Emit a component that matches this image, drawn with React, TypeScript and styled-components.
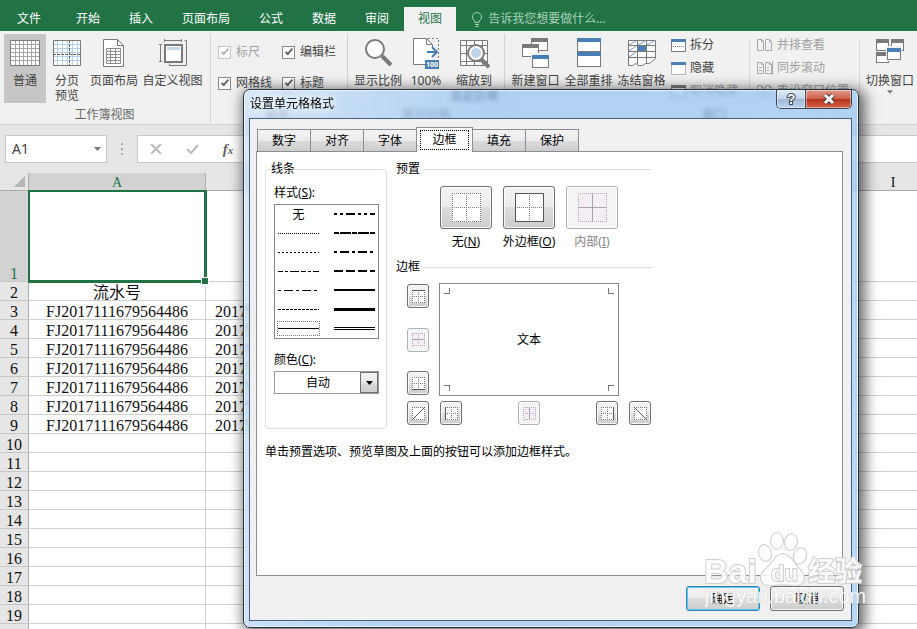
import React from 'react';
import styled, { createGlobalStyle, css } from 'styled-components';

const UI = '"Noto Sans", "Noto Sans CJK SC", sans-serif';
const SHEET = '"Liberation Serif", "Noto Sans CJK SC", serif';

const GlobalStyle = createGlobalStyle`
  *, *::before, *::after { box-sizing: border-box; }
  body { margin: 0; font: 12px/16px ${UI}; color: #444; background: #fff; }
  button, input, select { font: inherit; color: inherit; margin: 0; padding: 0; border: 0; background: none; }
  svg { display: block; flex: none; }
`;

const Window = styled.div`
  position: relative;
  display: flex;
  flex-direction: column;
  height: 100vh;
  overflow: hidden;
`;

/* ---------- ribbon tabs ---------- */

const TabBar = styled.nav`
  display: flex;
  align-items: flex-end;
  flex: none;
  height: 31px;
  padding-left: 2px;
  background: #217346;
  white-space: nowrap;
`;

const RibbonTab = styled.button<{ $active?: boolean; $file?: boolean }>`
  height: 24px;
  padding: ${p => (p.$file ? '0 20px 0 15px' : '0 14px')};
  margin-right: 1px;
  color: ${p => (p.$active ? '#217346' : '#fff')};
  background: ${p => (p.$active ? '#f1f1f1' : 'transparent')};
`;

const TellMe = styled.button`
  display: flex;
  align-items: center;
  gap: 5px;
  height: 24px;
  margin-left: 14px;
  color: #a9d0b9;
`;

/* ---------- ribbon ---------- */

const Ribbon = styled.div`
  display: flex;
  flex: none;
  height: 94px;
  padding: 3px 0 1px 4px;
  background: #f1f1f1;
  border-bottom: 1px solid #d2d2d2;
  white-space: nowrap;
  overflow: hidden;
`;

const Group = styled.section<{ $pad: string }>`
  display: flex;
  flex: none;
  flex-direction: column;
  justify-content: space-between;
  padding: ${p => p.$pad};
  border-right: 1px solid #d4d4d4;
`;

const GroupBody = styled.div`
  display: flex;
  align-items: flex-start;
`;

const GroupLabel = styled.div`
  text-align: center;
  color: #666;
`;

const BigButton = styled.button<{ $w: number; $active?: boolean }>`
  display: flex;
  flex-direction: column;
  align-items: center;
  width: ${p => p.$w}px;
  height: 69px;
  padding-top: 2px;
  line-height: 15px;
  background: ${p => (p.$active ? '#c6c6c6' : 'transparent')};
`;

const BigLabel = styled.span`
  margin-top: 2px;
  white-space: pre;
`;

const CheckGrid = styled.div`
  display: grid;
  grid-template-columns: 64px auto;
  grid-auto-rows: 16px;
  row-gap: 15px;
  padding-top: 10px;
`;

const CheckLabel = styled.label<{ $dim?: boolean }>`
  display: flex;
  align-items: center;
  gap: 5px;
  color: ${p => (p.$dim ? '#a0a0a0' : '#444')};
`;

const CheckBox = styled.input`
  appearance: none;
  display: grid;
  place-items: center;
  width: 13px;
  height: 13px;
  border: 1px solid #8a8a8a;
  background: #fff;
  &::after {
    content: '';
    width: 8px;
    height: 4px;
    margin-bottom: 3px;
    border: solid #666;
    border-width: 0 0 2px 2px;
    transform: rotate(-48deg);
  }
  &:disabled { border-color: #c6c6c6; }
  &:disabled::after { border-color: #b5b5b5; }
`;

const SmallColumn = styled.div<{ $ml: number; $w: number }>`
  display: flex;
  flex-direction: column;
  align-items: flex-start;
  gap: 7px;
  width: ${p => p.$w}px;
  margin-left: ${p => p.$ml}px;
  padding-top: 3px;
`;

const SmallButton = styled.button<{ $dim?: boolean }>`
  display: flex;
  align-items: center;
  gap: 4px;
  height: 16px;
  color: ${p => (p.$dim ? '#a0a0a0' : '#444')};
`;

const InnerRule = styled.div`
  width: 1px;
  height: 64px;
  margin-top: 6px;
  background: #dadada;
`;

/* ---------- formula bar ---------- */

const FormulaBar = styled.div`
  display: flex;
  align-items: center;
  flex: none;
  height: 48px;
  padding-left: 5px;
  background: #e6e6e6;
`;

const NameBox = styled.div`
  display: flex;
  width: 102px;
  height: 28px;
  padding: 0 5px 0 6px;
  background: #fff;
  border: 1px solid #c6c6c6;
`;

const NameInput = styled.input`
  flex: 1;
  min-width: 0;
  font-size: 14px;
`;

const Dots = styled.div`
  display: grid;
  place-items: center;
  width: 30px;
`;

const FormulaBox = styled.div`
  display: flex;
  align-items: center;
  flex: 1;
  height: 28px;
  padding-left: 9px;
  background: #fff;
  border: 1px solid #c6c6c6;
  border-right: 0;
`;

const FormulaButton = styled.button`
  display: grid;
  place-items: center;
  width: 18px;
  height: 26px;
  margin-right: 18px;
  color: #666;
  font: italic bold 15px/20px "Liberation Serif", serif;
`;

const Sub = styled.small`
  font-size: 11px;
`;

const FormulaInput = styled.input`
  flex: 1;
  min-width: 0;
`;

/* ---------- sheet ---------- */

const SheetArea = styled.main`
  flex: 1;
  min-height: 0;
  overflow: hidden;
`;

const Sheet = styled.table`
  width: 934px;
  table-layout: fixed;
  border-collapse: separate;
  border-spacing: 0;
  font: 16px/15px ${SHEET};
  color: #111;
`;

const head = css`
  font-weight: 400;
  background: #e6e6e6;
`;

const ColHead = styled.th<{ $on?: boolean }>`
  ${head}
  height: 18px;
  padding: 3px 0 0;
  font-size: 14px;
  line-height: 14px;
  border-bottom: 1px solid #ababab;
  border-right: ${p => (p.$on ? '1px solid #ababab' : '0')};
  ${p => p.$on && 'background: #d2d2d2; color: #217346;'}
`;

const Corner = styled.th`
  ${head}
  padding: 0;
  border-right: 1px solid #ababab;
  border-bottom: 1px solid #ababab;
`;

const CornerMark = styled.svg`
  margin-left: auto;
  margin-right: 3px;
`;

const RowHead = styled.th<{ $on?: boolean }>`
  ${head}
  height: ${p => (p.$on ? 91 : 19)}px;
  padding: 3px 0 0;
  vertical-align: bottom;
  border-right: 1px solid #ababab;
  border-bottom: 1px solid #c6c6c6;
  ${p => p.$on && 'background: #d2d2d2; color: #217346;'}
`;

const Cell = styled.td<{ $center?: boolean; $rule?: boolean; $on?: boolean }>`
  position: relative;
  padding: 3px ${p => (p.$center ? 0 : 9)}px 0;
  text-align: ${p => (p.$center ? 'center' : 'left')};
  border-bottom: 1px solid #d0d0d0;
  border-right: ${p => (p.$rule ? '1px solid #d0d0d0' : '0')};
  background: #fff;
  ${p => p.$on && 'box-shadow: 0 0 0 1px #217346, inset 0 0 0 1px #217346; z-index: 1; border-color: #217346;'}
`;

const FillHandle = styled.span`
  position: absolute;
  right: -3px;
  bottom: -3px;
  width: 6px;
  height: 6px;
  background: #217346;
  outline: 1px solid #fff;
`;

/* ---------- dialog ---------- */

const Dialog = styled.section`
  position: absolute;
  left: 243px;
  top: 89px;
  display: flex;
  flex-direction: column;
  width: 616px;
  height: 539px;
  padding: 0 6px 6px 5px;
  color: #000;
  border: 1px solid #26323f;
  border-radius: 7px;
  background: linear-gradient(100deg, rgba(196, 222, 248, .65), rgba(136, 189, 243, .62) 35%, rgba(140, 192, 245, .62));
  backdrop-filter: blur(2px);
  box-shadow: inset 0 0 0 1px rgba(255, 255, 255, .65), 3px 3px 14px 3px rgba(0, 0, 0, .6);
`;

const TitleBar = styled.header`
  display: flex;
  justify-content: space-between;
  align-items: flex-start;
  height: 28px;
  padding-left: 1px;
`;

const Title = styled.h1`
  margin: 0;
  padding-top: 6px;
  font: 12px/16px ${UI};
  text-shadow: 0 0 8px #fff, 0 0 8px #fff;
`;

const Caption = styled.div`
  display: flex;
  height: 19px;
  border: 1px solid #3b4755;
  border-top: 0;
  border-radius: 0 0 5px 5px;
  overflow: hidden;
`;

const CaptionButton = styled.button<{ $close?: boolean }>`
  display: grid;
  place-items: center;
  width: ${p => (p.$close ? 46 : 28)}px;
  box-shadow: inset 0 0 0 1px rgba(255, 255, 255, .45);
  background: ${p =>
    p.$close
      ? 'linear-gradient(#e39a8c 0, #d0604c 48%, #b5301a 50%, #d5644a)'
      : 'linear-gradient(#dbe8f5 0, #c3d6ea 48%, #9fb8d2 50%, #bcd3ec)'};
  border-left: ${p => (p.$close ? '1px solid #3b4755' : '0')};
`;

const Body = styled.div`
  display: flex;
  flex-direction: column;
  flex: 1;
  padding: 8px 8px 9px 6px;
  background: #f0f0f0;
  border: 1px solid #4c6078;
`;

const Tabs = styled.div`
  display: flex;
  align-items: flex-end;
  height: 24px;
  padding-left: 1px;
`;

const Tab = styled.button<{ $active?: boolean }>`
  display: grid;
  place-items: center;
  width: ${p => (p.$active ? 57 : 54)}px;
  height: ${p => (p.$active ? 25 : 22)}px;
  margin: 0 -1px ${p => (p.$active ? '-1px' : '0')} 0;
  border: 1px solid #8c8e94;
  border-bottom: 0;
  z-index: ${p => (p.$active ? 1 : 0)};
  background: ${p => (p.$active ? '#fff' : 'linear-gradient(#f3f3f3 0, #ebebeb 50%, #dcdcdc 51%, #cdcdcd)')};
`;

const Focus = styled.span`
  padding: 1px 11px;
  border: 1px dotted #000;
`;

const Panel = styled.div`
  display: flex;
  flex-direction: column;
  flex: 1;
  padding: 9px 8px;
  background: #fff;
  border: 1px solid #8c8e94;
`;

const PanelColumns = styled.div`
  display: flex;
  align-items: flex-start;
  gap: 9px;
`;

const LineGroup = styled.fieldset`
  display: flex;
  flex-direction: column;
  width: 122px;
  height: 268px;
  min-width: 0;
  margin: 0;
  padding: 0 7px 0 8px;
  border: 1px solid #d5dfe5;
  border-radius: 4px;
`;

const Legend = styled.legend`
  margin-left: -3px;
  padding: 0;
  line-height: 16px;
`;

const FieldLabel = styled.label<{ $gap: number }>`
  display: block;
  line-height: 16px;
  margin: ${p => p.$gap}px 0 3px;
`;

const StyleList = styled.div`
  display: grid;
  grid-auto-flow: column;
  grid-template-rows: repeat(7, 19px);
  grid-template-columns: 43px 43px;
  justify-content: space-between;
  width: 105px;
  height: 135px;
  padding: 0 2px;
  border: 1px solid #828790;
`;

const StyleItem = styled.button<{ $focus?: boolean }>`
  display: grid;
  place-items: center;
  width: 43px;
  height: ${p => (p.$focus ? 15 : 19)}px;
  align-self: center;
  border: ${p => (p.$focus ? '1px dotted #777' : '0')};
`;

const ColorBox = styled.div`
  display: grid;
  grid-template-columns: 1fr 18px;
  width: 105px;
  height: 23px;
  border: 1px solid #9a9a9a;
`;

const ColorSelect = styled.select`
  grid-area: 1 / 1 / 2 / 3;
  appearance: none;
  width: 100%;
  padding-left: 31px;
`;

const ColorArrow = styled.span`
  grid-area: 1 / 2;
  display: grid;
  place-items: center;
  border: 1px solid #707070;
  background: linear-gradient(#f3f3f3 0, #ebebeb 50%, #dcdcdc 51%, #cdcdcd);
  pointer-events: none;
`;

const RightSide = styled.div`
  flex: none;
  width: 256px;
`;

const Section = styled.h2`
  display: flex;
  align-items: center;
  gap: 5px;
  margin: 0;
  font: 12px/16px ${UI};
  &::after {
    content: '';
    flex: 1;
    height: 1px;
    background: #d5dfe5;
  }
`;

const Presets = styled.div`
  display: flex;
  gap: 11px;
  padding: 9px 0 9px 44px;
`;

const PresetLabel = styled.label<{ $dim?: boolean }>`
  display: flex;
  flex-direction: column;
  align-items: center;
  gap: 5px;
  width: 52px;
  white-space: nowrap;
  color: ${p => (p.$dim ? '#838383' : '#000')};
`;

const face = css`
  display: grid;
  place-items: center;
  border: 1px solid #707070;
  border-radius: 3px;
  box-shadow: inset 0 0 0 1px rgba(255, 255, 255, .8);
  background: linear-gradient(#f3f3f3 0, #ebebeb 48%, #dddddd 50%, #cdcdcd);
  &:disabled {
    border-color: #adb2b5;
    background: #f4f4f4;
  }
`;

const PresetButton = styled.button`
  ${face}
  width: 52px;
  height: 43px;
`;

const EdgeButton = styled.button`
  ${face}
  width: 22px;
  height: 24px;
`;

const BorderGrid = styled.div`
  display: grid;
  grid-template-columns: 22px 180px 22px;
  grid-template-rows: 113px 24px;
  gap: 5px 10px;
  padding: 8px 0 0 11px;
`;

const Stack = styled.div`
  display: flex;
  flex-direction: column;
  justify-content: space-between;
  padding: 1px 0;
`;

const Spread = styled.div`
  display: flex;
  justify-content: space-between;
  padding: 0 1px;
`;

const Preview = styled.div`
  position: relative;
  display: grid;
  place-items: center;
  border: 1px solid #828790;
`;

const CropMark = styled.i<{ $v: 'top' | 'bottom'; $h: 'left' | 'right' }>`
  position: absolute;
  ${p => p.$v}: 4px;
  ${p => p.$h}: 4px;
  width: 6px;
  height: 6px;
  border: 0 solid #777;
  border-${p => (p.$v === 'top' ? 'bottom' : 'top')}-width: 1px;
  border-${p => (p.$h === 'left' ? 'right' : 'left')}-width: 1px;
`;

const Hint = styled.p`
  margin: 15px 0 0;
`;

const Actions = styled.footer`
  display: flex;
  justify-content: flex-end;
  gap: 10px;
  padding-top: 10px;
  margin-right: -1px;
`;

const ActionButton = styled.button<{ $primary?: boolean }>`
  ${face}
  width: 74px;
  height: 25px;
  ${p => p.$primary && 'border-color: #3c7fb1; box-shadow: inset 0 0 0 1px #52c9f0;'}
`;

const Watermark = styled.svg`
  position: absolute;
  right: 48px;
  bottom: 17px;
  pointer-events: none;
`;

/* ---------- icons ---------- */

const G = '#7a7a7a';
const B = '#4a7fb5';

const lines = (n: number, start: number, step: number, f: (v: number) => string) =>
  Array.from({ length: n }, (_, i) => f(start + i * step)).join('');

const NormalIcon = () => (
  <svg width="32" height="35" viewBox="0 0 32 35">
    <path d="M1.5 4.5h29v25h-29z" fill="#fff" />
    <path d={lines(5, 8.5, 4, v => `M1 ${v}h30`) + lines(5, 6.5, 4, v => `M${v} 4v25`) + 'M26.5 4v25'} stroke="#a6a6a6" />
    <path d="M1.5 4.5h29v25h-29z" fill="none" stroke={G} />
  </svg>
);

const PageBreakIcon = () => (
  <svg width="32" height="35" viewBox="0 0 32 35">
    <path d="M2.5 4.5h27v25h-27z" fill="#fff" />
    <path d={lines(5, 8.5, 4, v => `M2 ${v}h28`) + lines(5, 6.5, 5, v => `M${v} 4v25`)} stroke="#b5d0e6" />
    <path d="M2.5 4.5h27v25h-27z" fill="none" stroke={G} />
    <path d="M18.5 4v26M2 18.5h28" stroke="#666" strokeDasharray="3 1" />
  </svg>
);

const PageLayoutIcon = () => (
  <svg width="32" height="35" viewBox="0 0 32 35">
    <path d="M5.5 3.5h14l6 6v21h-20z" fill="#fff" stroke={G} />
    <path d="M19.5 3.5v6h6" fill="none" stroke={G} />
    <path d="M8.5 12.5h14v15h-14zM8 15.5h15M8 18.5h15M8 21.5h15M8 24.5h15M12.5 12v15M17.5 12v15" fill="none" stroke="#8c8c8c" />
  </svg>
);

const CustomViewIcon = () => (
  <svg width="32" height="35" viewBox="0 0 32 35">
    <path d="M7.500 4.500h17M7.500 3v3M24.500 3v3M3.500 8.500v17M2 8.500h3M2 25.500h3" stroke={G} />
    <path d="M27.500 4.500h2v25h-17v-2" fill="none" stroke={G} />
    <path d="M8 9h17v17H8z" fill="#fff" stroke={G} strokeWidth="2" />
    <path d="M10 11h13v3H10z" fill="#c7d8e8" />
  </svg>
);

const ZoomIcon = () => (
  <svg width="32" height="35" viewBox="0 0 32 35">
    <path d="M20 20l9 9" stroke={G} strokeWidth="4" />
    <circle cx="13" cy="13" r="9" fill="#fff" stroke={G} strokeWidth="2" />
  </svg>
);

const HundredIcon = () => (
  <svg width="32" height="35" viewBox="0 0 32 35">
    <path d="M3.500 2.500h13l6 6v20h-19z" fill="#fff" />
    <path d="M16 28.500H3.500v-26h13l6 6v4" fill="none" stroke={G} />
    <path d="M16.500 2.500v6h6" fill="none" stroke={G} />
    <path d="M18 2.500h10.500v20" fill="none" stroke={G} strokeDasharray="2 2" />
    <path d="M17 16h10M22 11l5 5-5 5" fill="none" stroke={B} strokeWidth="2" />
    <path d="M15 24h14v9H15z" fill={B} />
    <text x="16" y="31" fontSize="7" fontWeight="700" fill="#fff">100</text>
  </svg>
);

const ZoomSelIcon = () => (
  <svg width="32" height="35" viewBox="0 0 32 35">
    <path d="M2.500 4.500h27v25h-27z" fill="#fff" />
    <path d="M2.500 4.500h27v25h-27zM2 9.500h28M2 17.500h28M2 25.500h28M8.500 4v25M16.500 4v25M24.500 4v25" fill="none" stroke={G} />
    <path d="M23 23l8 8" stroke={G} strokeWidth="4" />
    <circle cx="18" cy="17" r="8" fill="#fff" stroke={G} strokeWidth="2" />
    <circle cx="18" cy="17" r="5" fill="#bcd3e8" />
  </svg>
);

const Pane = ({ x, y, w = 16, h = 12, c = G }: { x: number; y: number; w?: number; h?: number; c?: string }) => (
  <g>
    <rect x={x + 0.5} y={y + 0.5} width={w} height={h} fill="#fff" stroke={G} />
    <rect x={x} y={y} width={w + 1} height={4} fill={c} />
  </g>
);

const NewWindowIcon = () => (
  <svg width="32" height="35" viewBox="0 0 32 35">
    <Pane x={11} y={2} />
    <Pane x={2} y={8} />
    <path d="M11 17h20v16H11z" fill="#f1f1f1" />
    <Pane x={12} y={19} c={B} />
  </svg>
);

const ArrangeIcon = () => (
  <svg width="32" height="35" viewBox="0 0 32 35">
    <Pane x={4} y={2} w={23} h={13} c={B} />
    <Pane x={4} y={16} w={23} h={14} c={B} />
  </svg>
);

const FreezeIcon = () => (
  <svg width="32" height="35" viewBox="0 0 32 35">
    <path d="M2.500 4.500h27v18l-6 5h-4l-3 2h-4l-3-2-3 2h-4z" fill="#fff" stroke={G} />
    <path d="M2 9.500h28M2 15.500h28M2 21.500h28M11.500 4v24M20.500 4v24" stroke={G} />
    <path d="M3 9l7-4M12 9l7-4M21 9l7-4M3 15l7-5M3 21l7-5" stroke="#6f9cc4" />
    <path d="M12 10h8v5h-8z" fill={B} />
  </svg>
);

const SwitchIcon = () => (
  <svg width="32" height="35" viewBox="0 0 32 35">
    <Pane x={2} y={3} w={12} h={11} />
    <Pane x={17} y={3} w={12} h={11} />
    <Pane x={2} y={16} w={12} h={10} />
    <path d="M12 10h16v15H12z" fill="#f1f1f1" />
    <Pane x={13} y={12} w={13} h={11} c={B} />
  </svg>
);

const MiniWindow = ({ kind }: { kind: 'split' | 'hide' | 'unhide' }) => (
  <svg width="15" height="13" viewBox="0 0 15 13">
    <path d="M.500.500h14v12H.500z" fill="#fff" stroke={kind === 'hide' ? '#777' : G} strokeDasharray={kind === 'hide' ? '1 1' : undefined} />
    <path d="M0 0h15v3H0z" fill={kind === 'unhide' ? G : B} />
    {kind === 'split' && <path d="M2 7.500h11" stroke={G} strokeDasharray="1 1" />}
  </svg>
);

const PagesIcon = ({ sync }: { sync?: boolean }) => (
  <svg width="16" height="14" viewBox="0 0 16 14">
    <path d="M.500 1.500h4l2 2v9h-6zM8.500 1.500h4l2 2v9h-6zM4.500 1.500v2h2M12.500 1.500v2h2" fill="none" stroke="#aaa" />
    {sync && <path d="M2 6.500h3M2 9.500h3M10 6.500h2M10 9.500h2M15.500 0v14" stroke="#aaa" />}
  </svg>
);

const Arrow = ({ c = '#777', w = 7 }: { c?: string; w?: number }) => (
  <svg width={w} height="4" viewBox="0 0 7 4">
    <path d="M0 0h7L3.500 4z" fill={c} />
  </svg>
);

type Edge = 'none' | 'outer' | 'inner' | 'top' | 'midH' | 'bottom' | 'up' | 'left' | 'midV' | 'right' | 'down';

const solid: Record<Edge, string> = {
  none: '',
  outer: 'M0 .5h28M0 28.500h29M.5 0v28M28.500 0v28',
  inner: 'M0 14.500h29M14.500 0v29',
  top: 'M0 .5h13',
  midH: 'M0 6.500h13',
  bottom: 'M0 12.500h13',
  up: 'M0 13L13 0',
  left: 'M.5 0v13',
  midV: 'M6.500 0v13',
  right: 'M12.500 0v13',
  down: 'M0 0l13 13',
};

const EdgeIcon = ({ edge, big, dim }: { edge: Edge; big?: boolean; dim?: boolean }) => {
  const s = big ? 29 : 13;
  const m = (s - 1) / 2 + 0.5;
  const diagonal = edge === 'up' || edge === 'down';
  return (
    <svg width={s} height={s} viewBox={`0 0 ${s} ${s}`}>
      <path d={`M0 0h${s}v${s}H0z`} fill={dim ? '#f5eef7' : '#fff'} />
      <path
        d={`M0 .5h${s}M0 ${s - 0.5}h${s}M.5 0v${s}M${s - 0.5} 0v${s}` + (diagonal ? '' : `M0 ${m}h${s}M${m} 0v${s}`)}
        stroke={dim ? '#b5abb8' : '#777'}
        strokeDasharray="1 1"
      />
      <path d={solid[edge]} stroke={dim ? '#aaa2ad' : '#555'} />
    </svg>
  );
};

type Stroke = { w: number; dash?: string; double?: boolean };
const strokes: (Stroke | null)[] = [
  null,
  { w: 1, dash: '1 1' },
  { w: 1, dash: '2 2' },
  { w: 1, dash: '5 2 3 2 9 2' },
  { w: 1, dash: '3 3 9 3' },
  { w: 1, dash: '3 1' },
  { w: 1 },
  { w: 2, dash: '3 3 3 3 9 3' },
  { w: 2, dash: '5 1 11 1' },
  { w: 2, dash: '3 3 9 3' },
  { w: 2, dash: '9 3' },
  { w: 2 },
  { w: 3 },
  { w: 1, double: true },
];
const names = ['无', '细点线', '点线', '双点划线', '点划线', '虚线', '细实线', '中双点划线', '斜点划线', '中点划线', '中虚线', '中实线', '粗实线', '双线'];

const StrokeSample = ({ s }: { s: Stroke }) => (
  <svg width="41" height="5" viewBox="0 0 41 5">
    {s.double ? (
      <path d="M0 1.500h41M0 3.500h41" stroke="#000" />
    ) : (
      <path d={s.w === 2 ? 'M0 2h41' : 'M0 2.500h41'} stroke="#000" strokeWidth={s.w} strokeDasharray={s.dash} />
    )}
  </svg>
);

/* ---------- data ---------- */

const menu = ['开始', '插入', '页面布局', '公式', '数据', '审阅'];
const dialogTabs = ['数字', '对齐', '字体', '边框', '填充', '保护'];
const serial = 'FJ2017111679564486';
const rows = Array.from({ length: 18 }, (_, i) => {
  const n = i + 2;
  return { n, a: n === 2 ? '流水号' : n < 10 ? serial : '', b: n > 2 && n < 10 ? '20171116' : '' };
});

const Big = ({ icon, label, w, active }: { icon: React.ReactNode; label: string; w: number; active?: boolean }) => (
  <BigButton $w={w} $active={active}>
    {icon}
    <BigLabel>{label}</BigLabel>
  </BigButton>
);

const EdgeControl = ({ edge, label, dim }: { edge: Edge; label: string; dim?: boolean }) => (
  <EdgeButton aria-label={label} disabled={dim}>
    <EdgeIcon edge={edge} dim={dim} />
  </EdgeButton>
);

const ViewRibbon = () => (
  <Ribbon>
    <Group $pad="0 5px 0 0">
      <GroupBody>
        <Big icon={<NormalIcon />} label="普通" w={42} active />
        <Big icon={<PageBreakIcon />} label={'分页\n预览'} w={42} />
        <Big icon={<PageLayoutIcon />} label="页面布局" w={52} />
        <Big icon={<CustomViewIcon />} label="自定义视图" w={65} />
      </GroupBody>
      <GroupLabel>工作簿视图</GroupLabel>
    </Group>
    <Group $pad="0 11px 0 7px">
      <CheckGrid>
        <CheckLabel $dim><CheckBox type="checkbox" defaultChecked disabled />标尺</CheckLabel>
        <CheckLabel><CheckBox type="checkbox" defaultChecked />编辑栏</CheckLabel>
        <CheckLabel><CheckBox type="checkbox" defaultChecked />网格线</CheckLabel>
        <CheckLabel><CheckBox type="checkbox" defaultChecked />标题</CheckLabel>
      </CheckGrid>
      <GroupLabel>显示</GroupLabel>
    </Group>
    <Group $pad="0 5px 0 5px">
      <GroupBody>
        <Big icon={<ZoomIcon />} label="显示比例" w={50} />
        <Big icon={<HundredIcon />} label="100%" w={46} />
        <Big icon={<ZoomSelIcon />} label={'缩放到\n选定区域'} w={50} />
      </GroupBody>
      <GroupLabel>显示比例</GroupLabel>
    </Group>
    <Group $pad="0 5px 0 4px">
      <GroupBody>
        <Big icon={<NewWindowIcon />} label="新建窗口" w={53} />
        <Big icon={<ArrangeIcon />} label="全部重排" w={53} />
        <Big icon={<FreezeIcon />} label="冻结窗格" w={53} />
        <SmallColumn $ml={3} $w={78}>
          <SmallButton><MiniWindow kind="split" />拆分</SmallButton>
          <SmallButton><MiniWindow kind="hide" />隐藏</SmallButton>
          <SmallButton $dim><MiniWindow kind="unhide" />取消隐藏</SmallButton>
        </SmallColumn>
        <InnerRule />
        <SmallColumn $ml={7} $w={102}>
          <SmallButton $dim><PagesIcon />并排查看</SmallButton>
          <SmallButton $dim><PagesIcon sync />同步滚动</SmallButton>
          <SmallButton $dim><PagesIcon />重设窗口位置</SmallButton>
        </SmallColumn>
        <InnerRule />
        <BigButton $w={60}>
          <SwitchIcon />
          <BigLabel>切换窗口</BigLabel>
          <BigLabel><Arrow w={6} /></BigLabel>
        </BigButton>
      </GroupBody>
      <GroupLabel>窗口</GroupLabel>
    </Group>
  </Ribbon>
);

const FormatDialog = () => (
  <Dialog role="dialog" aria-labelledby="dlg-title">
    <TitleBar>
      <Title id="dlg-title">设置单元格格式</Title>
      <Caption>
        <CaptionButton aria-label="帮助">
          <svg width="14" height="16" viewBox="0 0 14 16">
            <text x="3" y="13" fontFamily="Liberation Sans, sans-serif" fontSize="14" fontWeight="700" fill="#fff" stroke="#3d4654" strokeWidth="2" paintOrder="stroke">?</text>
          </svg>
        </CaptionButton>
        <CaptionButton $close aria-label="关闭">
          <svg width="14" height="12" viewBox="0 0 14 12" fill="none">
            <path d="M3 2l8 8M11 2l-8 8" stroke="#4a3a40" strokeWidth="5" />
            <path d="M3 2l8 8M11 2l-8 8" stroke="#fff" strokeWidth="3" />
          </svg>
        </CaptionButton>
      </Caption>
    </TitleBar>
    <Body>
      <Tabs role="tablist">
        {dialogTabs.map(t => (
          <Tab key={t} role="tab" $active={t === '边框'} aria-selected={t === '边框'}>
            {t === '边框' ? <Focus>{t}</Focus> : t}
          </Tab>
        ))}
      </Tabs>
      <Panel>
        <PanelColumns>
          <LineGroup>
            <Legend>线条</Legend>
            <FieldLabel id="style-label" $gap={8}>样式(<u>S</u>):</FieldLabel>
            <StyleList role="listbox" aria-labelledby="style-label">
              {strokes.map((s, i) => (
                <StyleItem key={i} role="option" aria-label={names[i]} $focus={i === 6}>
                  {s ? <StrokeSample s={s} /> : '无'}
                </StyleItem>
              ))}
            </StyleList>
            <FieldLabel htmlFor="color" $gap={13}>颜色(<u>C</u>):</FieldLabel>
            <ColorBox>
              <ColorSelect id="color"><option>自动</option></ColorSelect>
              <ColorArrow><Arrow c="#000" /></ColorArrow>
            </ColorBox>
          </LineGroup>
          <RightSide>
            <Section>预置</Section>
            <Presets>
              <PresetLabel>
                <PresetButton><EdgeIcon edge="none" big /></PresetButton>
                <span>无(<u>N</u>)</span>
              </PresetLabel>
              <PresetLabel>
                <PresetButton><EdgeIcon edge="outer" big /></PresetButton>
                <span>外边框(<u>O</u>)</span>
              </PresetLabel>
              <PresetLabel $dim>
                <PresetButton disabled><EdgeIcon edge="inner" big dim /></PresetButton>
                <span>内部(<u>I</u>)</span>
              </PresetLabel>
            </Presets>
            <Section>边框</Section>
            <BorderGrid>
              <Stack>
                <EdgeControl edge="top" label="上边框" />
                <EdgeControl edge="midH" label="水平内边框" dim />
                <EdgeControl edge="bottom" label="下边框" />
              </Stack>
              <Preview>
                <CropMark $v="top" $h="left" />
                <CropMark $v="top" $h="right" />
                <CropMark $v="bottom" $h="left" />
                <CropMark $v="bottom" $h="right" />
                文本
              </Preview>
              <span />
              <EdgeControl edge="up" label="斜上边框" />
              <Spread>
                <EdgeControl edge="left" label="左边框" />
                <EdgeControl edge="midV" label="垂直内边框" dim />
                <EdgeControl edge="right" label="右边框" />
              </Spread>
              <EdgeControl edge="down" label="斜下边框" />
            </BorderGrid>
          </RightSide>
        </PanelColumns>
        <Hint>单击预置选项、预览草图及上面的按钮可以添加边框样式。</Hint>
      </Panel>
      <Actions>
        <ActionButton $primary>确定</ActionButton>
        <ActionButton>取消</ActionButton>
      </Actions>
    </Body>
  </Dialog>
);

const BaiduMark = () => (
  <Watermark width="168" height="82" viewBox="0 0 168 82" aria-hidden="true">
    <g fill="#fff" fillOpacity=".85" stroke="#d0d0d0" strokeWidth="2" paintOrder="stroke">
      <ellipse cx="64" cy="23" rx="6" ry="8" transform="rotate(-15 64 23)" />
      <ellipse cx="76" cy="11" rx="6" ry="8" />
      <ellipse cx="90" cy="12" rx="6" ry="8" transform="rotate(10 90 12)" />
      <ellipse cx="99" cy="26" rx="6" ry="8" transform="rotate(20 99 26)" />
      <path d="M82 24c-6 0-9 6-13 11-5 5-10 8-9 14 1 6 8 7 13 6 6-1 12-1 18 0 6 1 12-1 12-7 0-5-4-8-8-13-4-5-7-11-13-11z" />
      <text x="3" y="53" fontFamily="Liberation Sans, sans-serif" fontSize="34" fontWeight="700">Bai</text>
      <text x="70" y="51" fontFamily="Liberation Sans, sans-serif" fontSize="22" fontWeight="700">du</text>
      <text x="107" y="51" fontFamily="Noto Sans CJK SC, sans-serif" fontSize="27" fontWeight="700">经验</text>
    </g>
    <text x="4" y="73" fontFamily="Liberation Sans, sans-serif" fontSize="20" fill="#fff" fillOpacity=".85" stroke="#ccc" strokeOpacity=".5" strokeWidth="1" paintOrder="stroke">jingyan.baidu.com</text>
  </Watermark>
);

export default function App() {
  return (
    <Window>
      <GlobalStyle />
      <TabBar>
        <RibbonTab $file>文件</RibbonTab>
        {menu.map(m => <RibbonTab key={m}>{m}</RibbonTab>)}
        <RibbonTab $active>视图</RibbonTab>
        <TellMe>
          <svg width="12" height="15" viewBox="0 0 12 15" fill="none" stroke="currentColor">
            <path d="M4 10.500V9Q1.500 7.500 1.500 5a4.500 4.500 0 0 1 9 0Q10.500 7.500 8 9v1.500zM4 12.500h4M4.500 14.500h3" />
          </svg>
          告诉我您想要做什么...
        </TellMe>
      </TabBar>
      <ViewRibbon />
      <FormulaBar>
        <NameBox>
          <NameInput aria-label="名称框" defaultValue="A1" />
          <button aria-label="展开名称框"><Arrow /></button>
        </NameBox>
        <Dots>
          <svg width="2" height="12" viewBox="0 0 2 12"><path d="M0 0h2v2H0zM0 5h2v2H0zM0 10h2v2H0z" fill="#aaa" /></svg>
        </Dots>
        <FormulaBox>
          <FormulaButton aria-label="取消输入">
            <svg width="12" height="10" viewBox="0 0 12 10"><path d="M1 0l10 10M11 0L1 10" stroke="#bbb" strokeWidth="2" /></svg>
          </FormulaButton>
          <FormulaButton aria-label="确认输入">
            <svg width="13" height="10" viewBox="0 0 13 10"><path d="M1 5l4 4 7-8" fill="none" stroke="#bbb" strokeWidth="2" /></svg>
          </FormulaButton>
          <FormulaButton aria-label="插入函数"><span>f<Sub>x</Sub></span></FormulaButton>
          <FormulaInput aria-label="编辑栏" />
        </FormulaBox>
      </FormulaBar>
      <SheetArea>
        <Sheet>
          <colgroup>
            <col width="29" />
            <col width="177" />
            <col width="178" />
            {[...'CDEFGH'].map(c => <col key={c} width="78" />)}
            <col width="82" />
          </colgroup>
          <thead>
            <tr>
              <Corner>
                <CornerMark width="11" height="11" viewBox="0 0 11 11"><path d="M11 0v11H0z" fill="#b4b4b4" /></CornerMark>
              </Corner>
              {[...'ABCDEFGHI'].map(c => <ColHead key={c} $on={c === 'A'}>{c}</ColHead>)}
            </tr>
          </thead>
          <tbody>
            <tr>
              <RowHead $on>1</RowHead>
              <Cell $on $rule><FillHandle /></Cell>
              <Cell colSpan={8} />
            </tr>
            {rows.map(r => (
              <tr key={r.n}>
                <RowHead>{r.n}</RowHead>
                <Cell $center $rule>{r.a}</Cell>
                <Cell>{r.b}</Cell>
                <Cell colSpan={7} />
              </tr>
            ))}
            <tr>
              <RowHead />
              <Cell $rule />
              <Cell colSpan={8} />
            </tr>
          </tbody>
        </Sheet>
      </SheetArea>
      <FormatDialog />
      <BaiduMark />
    </Window>
  );
}
